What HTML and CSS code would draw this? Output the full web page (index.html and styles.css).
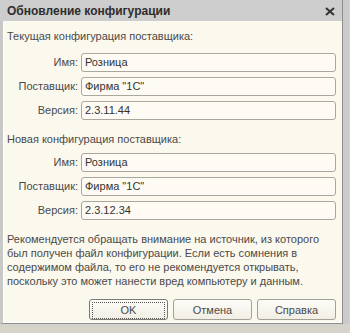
FILE: index.html
```html
<!DOCTYPE html>
<html lang="ru">
<head>
<meta charset="utf-8">
<title>Обновление конфигурации</title>
<link rel="stylesheet" href="styles.css">
</head>
<body>
<div class="window">
  <div class="titlebar">
    <span class="title">Обновление конфигурации</span>
    <svg class="close" width="10" height="9" viewBox="0 0 10 9"><path d="M1 1 L9 8 M9 1 L1 8" stroke="#333" stroke-width="2" fill="none"/></svg>
  </div>
  <div class="content">
    <div class="heading first">Текущая конфигурация поставщика:</div>
    <div class="form">
      <span class="label">Имя:</span><div class="field">Розница</div>
      <span class="label">Поставщик:</span><div class="field">Фирма "1С"</div>
      <span class="label">Версия:</span><div class="field">2.3.11.44</div>
    </div>
    <div class="heading second">Новая конфигурация поставщика:</div>
    <div class="form">
      <span class="label">Имя:</span><div class="field">Розница</div>
      <span class="label">Поставщик:</span><div class="field">Фирма "1С"</div>
      <span class="label">Версия:</span><div class="field">2.3.12.34</div>
    </div>
    <p class="note">Рекомендуется обращать внимание на источник, из которого был получен файл конфигурации. Если есть сомнения в содержимом файла, то его не рекомендуется открывать, поскольку это может нанести вред компьютеру и данным.</p>
    <div class="buttons">
      <button class="btn default"><span class="focus">OK</span></button>
      <button class="btn">Отмена</button>
      <button class="btn">Справка</button>
    </div>
  </div>
</div>
</body>
</html>
```

FILE: styles.css
```css
html, body {
  margin: 0;
  padding: 0;
}
body {
  width: 350px;
  height: 333px;
  background: #d6d3ca;
  font-family: "Liberation Sans", Arial, sans-serif;
  font-size: 11px;
  color: #4a4a4a;
  overflow: hidden;
}
.window {
  width: 339px;
  height: 323px;
  background: #fbf8ee;
  border-left: 3px solid #c8c8c8;
  border-right: 1px solid #8e8e8e;
  border-bottom: 1px solid #8e8e8e;
  box-shadow: inset 1px 0 0 #ffffff, inset 0 -1px 0 #ffffff;
  position: relative;
}
.window::after {
  content: "";
  position: absolute;
  top: 0;
  left: 340px;
  width: 6px;
  height: 324px;
  background: #cbcbcb;
}
.titlebar {
  height: 21px;
  margin-left: -3px;
  background: #cdcdcd;
  display: flex;
  align-items: center;
  justify-content: space-between;
  padding: 0 7px 0 7px;
}
.title {
  font-weight: bold;
  font-size: 12px;
  color: #2e2e2e;
  padding-top: 1px;
}
.close {
  display: block;
  margin-top: 2px;
}
.content {
  padding: 8px 6px 0 4px;
}
.heading {
  line-height: 14px;
  height: 14px;
}
.heading.first {
  margin-bottom: 10px;
}
.heading.second {
  margin-top: 12px;
  margin-bottom: 7px;
}
.form {
  display: grid;
  grid-template-columns: 71px 1fr;
  column-gap: 3px;
  row-gap: 5px;
}
.label {
  text-align: right;
  line-height: 19px;
}
.field {
  height: 17px;
  line-height: 17px;
  border: 1px solid #aaa89c;
  border-radius: 3px;
  background: #fdfbf4;
  padding-left: 3px;
  color: #333333;
}
.note {
  margin: 12px 0 0 0;
  line-height: 14px;
  padding-right: 2px;
}
.buttons {
  display: flex;
  justify-content: flex-end;
  gap: 5px;
  margin-top: 11px;
}
.btn {
  width: 79px;
  height: 21px;
  border: 1px solid #a3a196;
  border-radius: 3px;
  background: linear-gradient(#fdfcf8, #f1eee4);
  font-family: "Liberation Sans", Arial, sans-serif;
  font-size: 11px;
  color: #4a4a4a;
  padding: 0;
}
.btn.default {
  border-color: #7d7b72;
  padding: 2px;
}
.focus {
  display: block;
  height: 15px;
  line-height: 15px;
  border: 1px dotted #555;
}
```
